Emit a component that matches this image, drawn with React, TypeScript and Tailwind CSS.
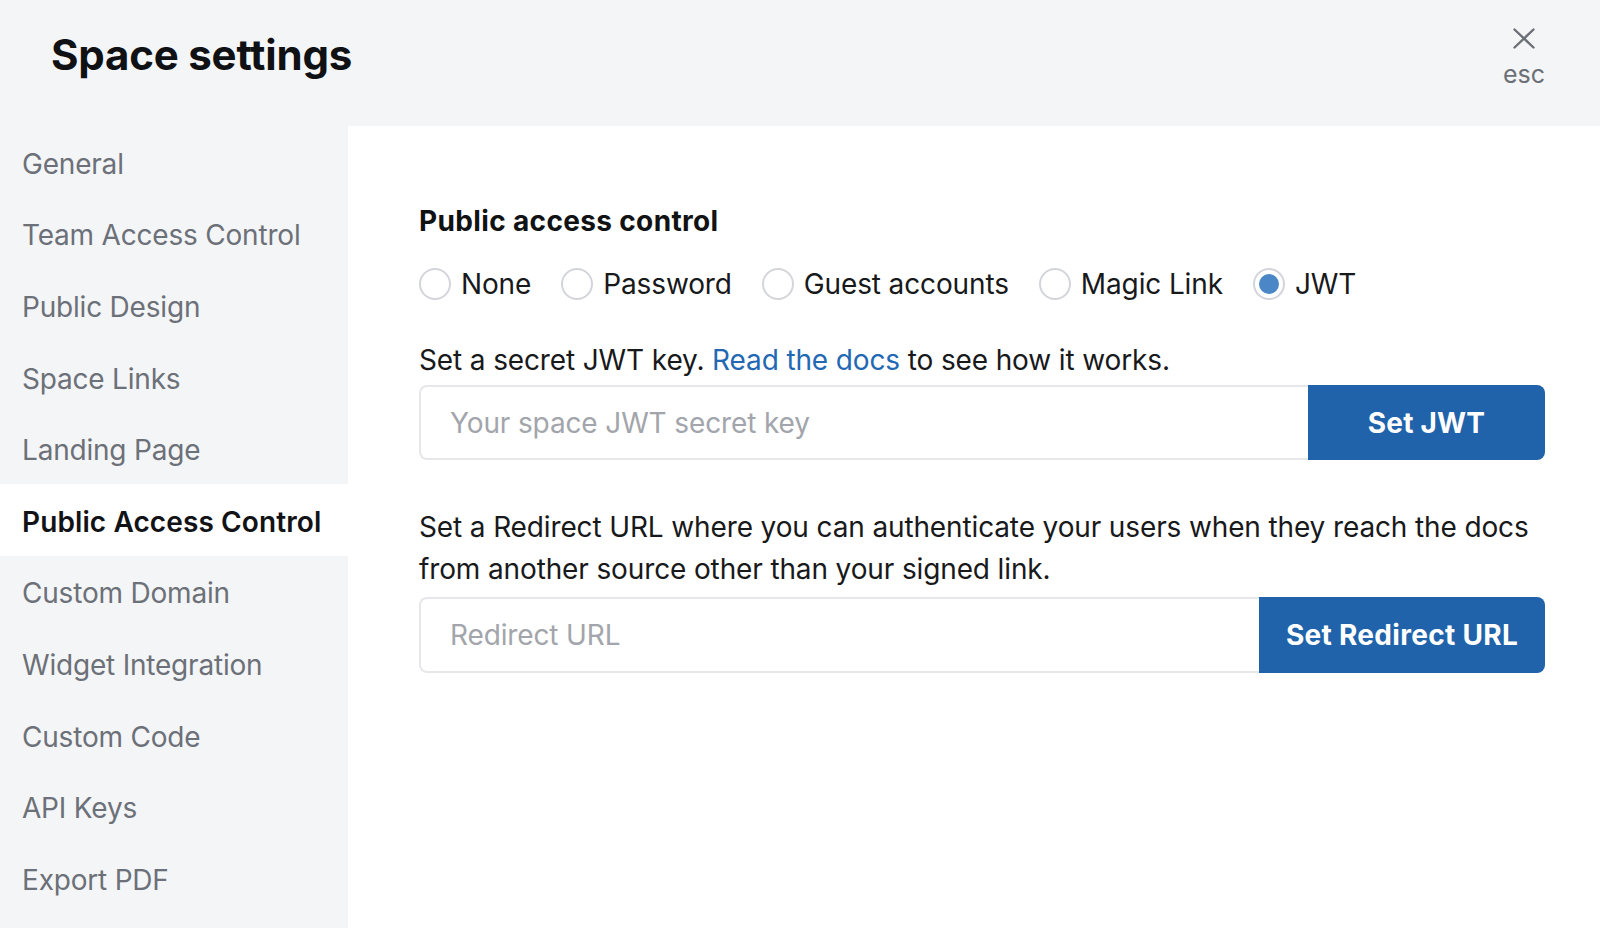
import { useState } from 'react';

const NAV_ITEMS = [
  'General',
  'Team Access Control',
  'Public Design',
  'Space Links',
  'Landing Page',
  'Public Access Control',
  'Custom Domain',
  'Widget Integration',
  'Custom Code',
  'API Keys',
  'Export PDF',
];

const ACCESS_OPTIONS = ['None', 'Password', 'Guest accounts', 'Magic Link', 'JWT'];

function Radio({ checked }: { checked: boolean }) {
  return (
    <span className="flex h-[32px] w-[32px] shrink-0 items-center justify-center rounded-full border-2 border-[#d3d5da] bg-white">
      {checked && <span className="h-[20px] w-[20px] rounded-full bg-[#4b86c7]" />}
    </span>
  );
}

export default function App() {
  const [active, setActive] = useState('Public Access Control');
  const [access, setAccess] = useState('JWT');
  const [jwt, setJwt] = useState('');
  const [redirect, setRedirect] = useState('');

  return (
    <div
      className="flex h-[928px] w-[1600px] flex-col overflow-hidden bg-[#f4f5f7] text-[#18191b]"
      style={{ fontFamily: 'Inter, "Noto Sans", sans-serif' }}
    >
      {/* header */}
      <div className="flex h-[126px] shrink-0 justify-between">
        <h1 className="pl-[51px] pt-[34px] text-[42px] font-bold leading-[42px] tracking-[-0.2px] text-[#0f1114]">
          Space settings
        </h1>
        <button className="flex flex-col items-center pr-[55px] pt-[28px] text-[#6b6f76]">
          <svg width="22" height="21" viewBox="0 0 22 21" fill="none" stroke="currentColor" strokeWidth="2.4" strokeLinecap="round">
            <path d="M1.5 1.5 L20.5 19.5" />
            <path d="M20.5 1.5 L1.5 19.5" />
          </svg>
          <span className="mt-[13px] text-[25px] leading-[25px]">esc</span>
        </button>
      </div>

      <div className="flex flex-1">
        {/* sidebar */}
        <nav className="flex w-[348px] shrink-0 flex-col">
          {NAV_ITEMS.map((item) => (
            <button
              key={item}
              onClick={() => setActive(item)}
              className={`flex h-[71.6px] shrink-0 items-center pl-[22px] pt-[4px] text-left text-[28px] ${
                active === item
                  ? 'bg-white font-semibold tracking-[0.1px] text-[#121316]'
                  : 'tracking-[-0.2px] text-[#6c7078]'
              }`}
            >
              {item}
            </button>
          ))}
        </nav>

        {/* content */}
        <main className="flex-1 bg-white pl-[71px] pr-[55px] pt-[79px] tracking-[-0.13px]">
          <h2 className="text-[28px] font-bold leading-[32px] tracking-[0.35px] text-[#111214]">Public access control</h2>

          <div className="mt-[31px] flex items-center gap-[30px]">
            {ACCESS_OPTIONS.map((opt) => (
              <label key={opt} className="flex cursor-pointer items-center gap-[10px]" onClick={() => setAccess(opt)}>
                <Radio checked={access === opt} />
                <span className="text-[28px] leading-[32px]">{opt}</span>
              </label>
            ))}
          </div>

          <p className="mt-[39px] text-[28px] leading-[42px]">
            Set a secret JWT key. <a className="text-[#2268b2]">Read the docs</a> to see how it works.
          </p>

          <div className="mt-[4px] flex h-[75px]">
            <input
              value={jwt}
              onChange={(e) => setJwt(e.target.value)}
              placeholder="Your space JWT secret key"
              className="min-w-0 flex-1 rounded-l-[8px] border-2 border-r-0 border-[#e6e7ea] pl-[29px] text-[28px] outline-none placeholder:text-[#a2a5ab]"
            />
            <button className="w-[237px] shrink-0 rounded-r-[8px] bg-[#2063aa] text-[28px] font-bold tracking-[0.2px] text-white">
              Set JWT
            </button>
          </div>

          <p className="mt-[46px] text-[28px] leading-[42px]">
            Set a Redirect URL where you can authenticate your users when they reach the docs
            <br />
            from another source other than your signed link.
          </p>

          <div className="mt-[7px] flex h-[76px]">
            <input
              value={redirect}
              onChange={(e) => setRedirect(e.target.value)}
              placeholder="Redirect URL"
              className="min-w-0 flex-1 rounded-l-[8px] border-2 border-r-0 border-[#e6e7ea] pl-[29px] text-[28px] outline-none placeholder:text-[#a2a5ab]"
            />
            <button className="w-[286px] shrink-0 rounded-r-[8px] bg-[#2063aa] text-[28px] font-bold tracking-[0.3px] text-white">
              Set Redirect URL
            </button>
          </div>
        </main>
      </div>
    </div>
  );
}
